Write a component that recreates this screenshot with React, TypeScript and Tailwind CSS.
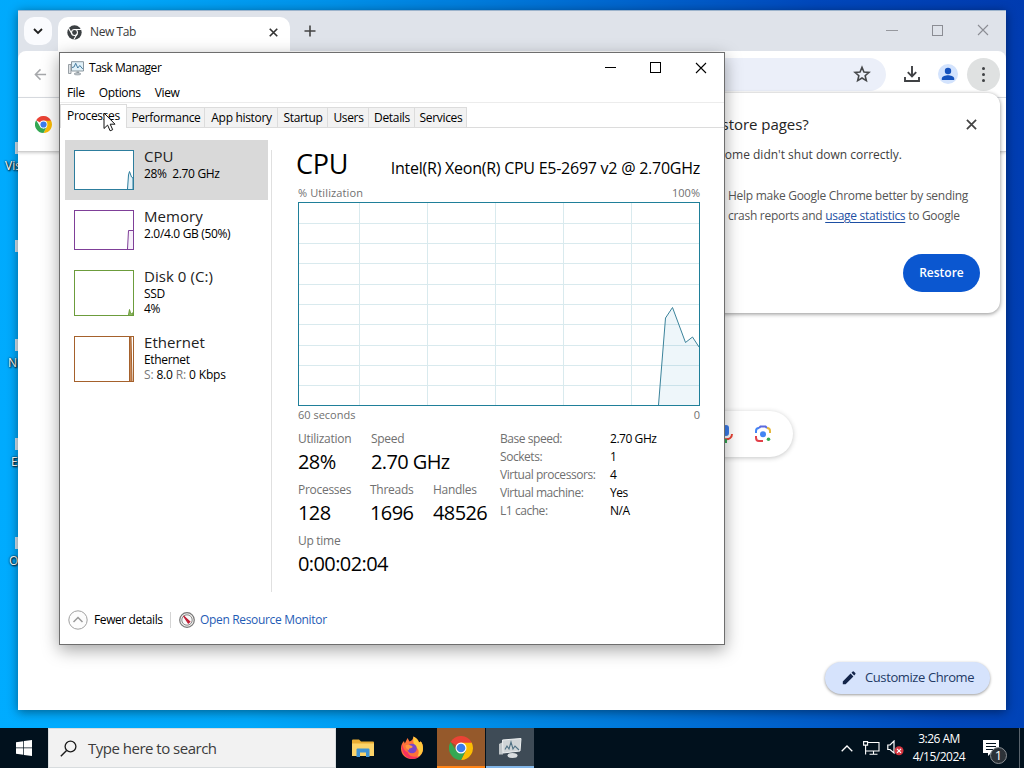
import type { ReactNode } from "react";

type Point = [number, number];

const tabs = [
  { label: "Performance", width: "w-[78px]" },
  { label: "App history", width: "w-[73px]" },
  { label: "Startup", width: "w-[50px]" },
  { label: "Users", width: "w-[41px]" },
  { label: "Details", width: "w-[46px]" },
  { label: "Services", width: "w-[52px]" },
];

const desktopIcons = [
  { label: "Vis", box: "top-[142px]", right: "left-[5px]" },
  { label: "", box: "top-[240px]", right: "left-[5px]" },
  { label: "N", box: "top-[339px]", right: "left-[8px]" },
  { label: "E", box: "top-[438px]", right: "left-[11px]" },
  { label: "O", box: "top-[537px]", right: "left-[9px]" },
];

const specs = [
  ["Base speed:", "2.70 GHz"],
  ["Sockets:", "1"],
  ["Virtual processors:", "4"],
  ["Virtual machine:", "Yes"],
  ["L1 cache:", "N/A"],
];

const cpuPoints: Point[] = [
  [360.5, 203],
  [367.5, 116],
  [374.5, 105.5],
  [387.5, 140.5],
  [394.5, 135],
  [401, 145],
];

function ChromeLogo({ className }: { className?: string }) {
  return (
    <svg viewBox="0 0 48 48" className={className}>
      <path d="M24 24 3.2 12A24 24 0 0 1 44.8 12L44.8 12.5Z" fill="#ea4335" />
      <path d="M24 13H45.3A24 24 0 0 1 24 48L33.5 29.5Z" fill="#fbbc04" />
      <path d="M3.2 12 14.5 29.5 24 35 33 30 24 48A24 24 0 0 1 3.2 12Z" fill="#34a853" />
      <path d="M24 13H45.3L44.8 12 24 10Z" fill="#ea4335" />
      <circle cx="24" cy="24" r="11" fill="#fff" />
      <circle cx="24" cy="24" r="8.7" fill="#3b7ded" />
    </svg>
  );
}

function ChromeMono() {
  return (
    <svg viewBox="0 0 48 48" className="h-[15px] w-[15px]">
      <circle cx="24" cy="24" r="23" fill="#3c4043" />
      <circle cx="24" cy="24" r="9.5" fill="none" stroke="#fff" strokeWidth="3.5" />
      <path d="M24 14.5H46M15.8 28.800 5 10M32.2 28.800 21.5 47" stroke="#fff" strokeWidth="3.5" />
    </svg>
  );
}

function TaskManagerIcon({ className }: { className?: string }) {
  return (
    <svg viewBox="0 0 16 16" className={className}>
      <path d="M.5 4.5h2.500v9H.5z" fill="#dfe3e6" stroke="#838c92" strokeWidth=".8" />
      <path d="M3.500 1.700h12v9.300h-12z" fill="#e2f1f8" stroke="#8b979f" strokeWidth="1" />
      <path d="M4 7.500 6 7l1.700-3.700L9.800 8l2-2.500 3 3.500" fill="none" stroke="#356f96" strokeWidth=".9" />
      <path d="M8.500 11.500h2.500V13H8.500z" fill="#8a949b" />
      <ellipse cx="9.5" cy="13.9" rx="3.4" ry="1.100" fill="#c1c8cc" stroke="#8a949b" strokeWidth=".6" />
    </svg>
  );
}

function CloseIcon({ className, width = 1.1 }: { className?: string; width?: number }) {
  return (
    <svg viewBox="0 0 12 12" className={className}>
      <path d="M1 1l10 10M11 1L1 11" stroke="currentColor" strokeWidth={width} fill="none" />
    </svg>
  );
}

function MiniGraph({
  height,
  color,
  fill,
  points,
}: {
  height: number;
  color: string;
  fill: string;
  points: Point[];
}) {
  return (
    <svg width="60" height={height} className="block shrink-0">
      <rect x=".5" y=".5" width="59" height={height - 1} fill="#fff" />
      <polyline points={points.join(" ")} fill={fill} stroke={color} strokeWidth="1" />
      <rect x=".5" y=".5" width="59" height={height - 1} fill="none" stroke={color} />
    </svg>
  );
}

function Resource({
  title,
  className,
  graph,
  children,
}: {
  title: string;
  className: string;
  graph: ReactNode;
  children: ReactNode;
}) {
  return (
    <div className={`flex gap-[10px] pl-[9px] ${className}`}>
      {graph}
      <div className="-mt-[3px] whitespace-nowrap text-[12px] leading-[15px] tracking-[-0.33px]">
        <div className="text-[15px] leading-[19px] tracking-[0.05px] text-[#222]">{title}</div>
        {children}
      </div>
    </div>
  );
}

function Stat({ label, value, className }: { label: string; value: string; className: string }) {
  return (
    <div className={`shrink-0 ${className}`}>
      <div className="text-[12px] leading-[18px] tracking-[-0.28px] text-[#707070]">{label}</div>
      <div className="text-[20px] leading-[28px] tracking-[-0.6px]">{value}</div>
    </div>
  );
}

function CpuGraph() {
  return (
    <svg width="402" height="204" className="block">
      <rect width="402" height="204" fill="#fff" />
      {[61.5, 129.5, 197.5, 265.5, 333.5].map((x) => (
        <path key={x} d={`M${x} 0v204`} stroke="#d9eaee" />
      ))}
      {[21.5, 41.5, 61.5, 82.5, 102.5, 122.5, 143.5, 163.5, 183.5].map((y) => (
        <path key={y} d={`M0 ${y}h402`} stroke="#d9eaee" />
      ))}
      <polygon points={`${cpuPoints.join(" ")} 401,203 360,203`} fill="#117dbb" fillOpacity=".07" />
      <polyline points={cpuPoints.join(" ")} fill="none" stroke="#3b839b" strokeWidth="1" />
      <rect x=".5" y=".5" width="401" height="203" fill="none" stroke="#1f7f99" />
    </svg>
  );
}

function Browser() {
  return (
    <div className="absolute left-[18px] top-[10px] flex h-[700px] w-[988px] flex-col overflow-hidden border-t border-[#9db4cc] bg-white">
      {/* Tab strip */}
      <div className="flex h-[40px] shrink-0 items-start bg-[#dfe3ea] pl-[6px] pt-[6px]">
        <div className="flex h-7 w-7 items-center justify-center rounded-[10px] bg-[#fafbfe]">
          <svg viewBox="0 0 12 12" className="h-3 w-3">
            <path d="M2 4l4 4 4-4" fill="none" stroke="#1f1f1f" strokeWidth="1.8" />
          </svg>
        </div>
        <div className="ml-[6px] flex h-[34px] w-[232px] items-center rounded-t-[10px] bg-white pb-[4px] pl-[9px]">
          <ChromeMono />
          <span className="ml-2 flex-1 text-[12px] tracking-[-0.4px] text-[#3a3a3a]">New Tab</span>
          <CloseIcon className="mr-[12px] h-[9px] w-[9px] text-[#333]" width={2.2} />
        </div>
        <svg viewBox="0 0 12 12" className="ml-[14px] mt-[8px] h-3 w-3">
          <path d="M6 .5v11M.5 6h11" stroke="#444" strokeWidth="1.6" />
        </svg>
        <div className="ml-auto mr-[17px] mt-[7px] flex items-center gap-[34px] text-[#8b8d94]">
          <span className="h-px w-[12px] bg-[#96989e]" />
          <span className="h-[11px] w-[11px] border border-[#8b8d94]" />
          <CloseIcon className="h-3 w-3" />
        </div>
      </div>

      {/* Toolbar */}
      <div className="flex shrink-0 bg-[#dfe3ea]">
        <div className="flex h-[47px] w-full items-center justify-between rounded-t-lg border-b border-[#dde1e6] bg-white pl-4 pr-[6px]">
          <svg viewBox="0 0 14 14" className="h-[13px] w-[13px]">
            <path d="M13 7H2M7 1.5 1.5 7 7 12.5" fill="none" stroke="#a6a8ab" strokeWidth="1.6" />
          </svg>
          <div className="flex items-center">
            <div className="mr-[18px] flex h-[33px] w-[640px] items-center justify-end rounded-full bg-[#ebeff9] pr-[15px]">
              <svg viewBox="0 0 24 24" className="h-[18px] w-[18px]">
                <path
                  d="M12 3.2l2.6 6.2 6.7.5-5.1 4.4 1.6 6.5L12 17.3l-5.8 3.5 1.6-6.500-5.100-4.400 6.700-.5z"
                  fill="none"
                  stroke="#45474a"
                  strokeWidth="2.1"
                />
              </svg>
            </div>
            <svg viewBox="0 0 16 16" className="h-4 w-4">
              <path d="M8 0v10M3.8 6.2 8 10.400l4.200-4.200M1 11v4h14v-4" fill="none" stroke="#3f4144" strokeWidth="1.9" />
            </svg>
            <svg viewBox="0 0 20 20" className="ml-[18px] h-5 w-5">
              <circle cx="10" cy="10" r="10" fill="#d3e3fd" />
              <circle cx="10" cy="7" r="3.2" fill="#1552bd" />
              <path d="M3.8 16v-1.500c0-2.100 4-3.200 6.200-3.200s6.200 1.100 6.200 3.200V16z" fill="#1552bd" />
            </svg>
            <div className="ml-[9px] flex h-[33px] w-[33px] flex-col items-center justify-center gap-[3px] rounded-full bg-[#dfe1e1]">
              <i className="h-[3px] w-[3px] rounded-full bg-[#3f4144]" />
              <i className="h-[3px] w-[3px] rounded-full bg-[#3f4144]" />
              <i className="h-[3px] w-[3px] rounded-full bg-[#3f4144]" />
            </div>
          </div>
        </div>
      </div>

      {/* Bookmark row */}
      <div className="flex h-[54px] shrink-0 items-center border-b border-[#cfcfcf] pl-[17px] shadow-[0_1px_3px_rgba(0,0,0,0.2)]">
        <ChromeLogo className="h-[17px] w-[17px]" />
      </div>

      {/* Page */}
      <div className="flex flex-1 flex-col items-end">
        <div className="mr-[213px] mt-[259px] flex h-[46px] w-[560px] items-center justify-end rounded-full bg-white pr-[21px] shadow-[0_1px_5px_rgba(32,33,36,0.26)]">
          <svg viewBox="0 0 16 18" className="mr-[20px] h-[18px] w-4">
            <rect x="5" y="0" width="6" height="11" rx="3" fill="#3b7ded" />
            <path d="M2 9c0 7 12 7 12 0" fill="none" stroke="#ea4335" strokeWidth="2" />
            <path d="M8 14v4" stroke="#34a853" strokeWidth="2" />
          </svg>
          <svg viewBox="0 0 18 18" className="h-[18px] w-[18px]">
            <g fill="none" strokeWidth="2">
              <path d="M2 8V6c0-2 1-3 3-3" stroke="#4285f4" />
              <path d="M5 3l1.500-1.500h5L13 3" stroke="#5b6be0" />
              <path d="M13 3c2 0 3 1 3 3v2" stroke="#e5b73b" />
              <path d="M2 11v1.500C2 14.500 3 16 5 16h4" stroke="#e2414a" />
            </g>
            <circle cx="9" cy="9.3" r="3" fill="#4285f4" />
            <circle cx="14.5" cy="14.3" r="1.8" fill="#34a853" />
          </svg>
        </div>
        <div className="mb-[16px] mr-4 mt-auto flex h-8 w-[165px] items-center rounded-full bg-[#d6e3fc] pl-[17px] shadow-[0_1px_3px_rgba(0,0,0,0.4)]">
          <svg viewBox="0 0 14 14" className="mr-[9px] h-[14px] w-[14px]">
            <path d="M.8 13.200V10.400L8.600 2.600l2.800 2.800-7.800 7.800zM9.500 1.700 10.700.6q.7-.5 1.300.1l1.300 1.300q.5.6 0 1.200l-1.100 1.200z" fill="#14254a" />
          </svg>
          <span className="whitespace-nowrap text-[13px] tracking-[-0.4px] text-[#233a66]">Customize Chrome</span>
        </div>
      </div>

      {/* Restore pages bubble */}
      <div className="absolute left-[534px] top-[82px] flex h-[220px] w-[448px] flex-col rounded-xl bg-white pl-[176px] pr-5 pt-[19px] shadow-[0_1px_4px_rgba(0,0,0,0.45)]">
        <div className="flex items-center justify-between pr-[3px]">
          <h2 className="-ml-[24px] whitespace-nowrap text-[15px] font-medium leading-[24px] tracking-[-0.05px] text-[#242424]">
            Restore pages?
          </h2>
          <CloseIcon className="h-[11px] w-[11px] text-[#444]" width={1.9} />
        </div>
        <p className="-ml-[23px] mt-[10px] whitespace-nowrap text-[12px] leading-[18px] text-[#3d3d3d]">
          Chrome didn't shut down correctly.
        </p>
        <p className="mt-[22px] whitespace-nowrap text-[12px] leading-[20px] tracking-[-0.28px] text-[#555]">
          Help make Google Chrome better by sending
          <br />
          crash reports and <span className="text-[#1d4fa3] underline underline-offset-2">usage statistics</span> to Google
        </p>
        <div className="ml-auto mt-[28px] flex h-[38px] w-[77px] items-center justify-center rounded-full bg-[#0b57d0] text-[12px] font-semibold text-white">
          Restore
        </div>
      </div>
    </div>
  );
}

function TaskManager() {
  return (
    <div className="absolute left-[59px] top-[52px] flex h-[593px] w-[666px] flex-col border border-[#6e6e6e] bg-white shadow-[0_5px_16px_rgba(0,0,0,0.36)]">
      {/* Title bar */}
      <div className="flex h-[30px] shrink-0 items-center pl-2 pr-[17px]">
        <TaskManagerIcon className="h-4 w-4" />
        <span className="ml-[5px] flex-1 text-[12px] tracking-[-0.48px]">Task Manager</span>
        <div className="-mt-px flex items-center gap-[34px]">
          <span className="h-px w-[11px] bg-black" />
          <span className="h-[11px] w-[11px] border border-black" />
          <CloseIcon className="h-3 w-3" />
        </div>
      </div>

      {/* Menu */}
      <div className="flex h-[20px] shrink-0 items-center gap-[14px] border-b border-[#ececec] pl-[7px] pt-px text-[12px] leading-[18px] tracking-[-0.33px]">
        <span>File</span>
        <span>Options</span>
        <span>View</span>
      </div>

      {/* Tabs */}
      <div className="flex h-[25px] shrink-0 items-end border-b border-[#dcdcdc] text-[12px] tracking-[-0.33px]">
        <div className="-mb-px flex h-[24px] w-[67px] justify-center border border-b-0 border-[#dcdcdc] bg-white pt-[2px] leading-[18px]">
          Processes
        </div>
        {tabs.map((tab) => (
          <div
            key={tab.label}
            className={`flex h-5 items-center justify-center whitespace-nowrap border-r border-t border-[#dcdcdc] bg-[#f2f2f2] pl-px pt-px leading-[18px] ${tab.width}`}
          >
            {tab.label}
          </div>
        ))}
      </div>

      <div className="flex flex-1">
        {/* Resource list */}
        <div className="mb-[27px] mt-[12px] w-[208px] shrink-0 pl-[5px]">
          <Resource
            title="CPU"
            className="h-[60px] w-[203px] bg-[#d9d9d9] pt-[10px]"
            graph={
              <MiniGraph
                height={40}
                color="#2d7d9d"
                fill="#e4f1f8"
                points={[[53.5, 39], [54.5, 25], [55.5, 21.5], [57.5, 27], [59, 28], [59, 39]]}
              />
            }
          >
            28%&nbsp; 2.70 GHz
          </Resource>
          <Resource
            title="Memory"
            className="h-[60px] pt-[10px]"
            graph={
              <MiniGraph height={40} color="#7f3f98" fill="#f7f0fa" points={[[53.5, 39], [54.5, 20.5], [60, 20.5], [60, 39]]} />
            }
          >
            2.0/4.0 GB (50%)
          </Resource>
          <Resource
            title="Disk 0 (C:)"
            className="h-[66px] pt-[10px]"
            graph={
              <MiniGraph
                height={46}
                color="#6c9c3c"
                fill="#8fb864"
                points={[[54.5, 45], [55.5, 39.5], [56.5, 43], [57.5, 44], [59, 42.5], [59, 45]]}
              />
            }
          >
            SSD
            <br />
            4%
          </Resource>
          <Resource
            title="Ethernet"
            className="h-[66px] pt-[10px]"
            graph={
              <MiniGraph
                height={46}
                color="#a5612c"
                fill="#c98a5b"
                points={[[55.5, 45], [55.5, 1], [57, 1], [58, 45]]}
              />
            }
          >
            Ethernet
            <br />
            <span className="tracking-[-0.15px]">
              <span className="text-[#777]">S:</span> 8.0 <span className="text-[#777]">R:</span> 0 Kbps
            </span>
          </Resource>
        </div>
        <div className="mb-[-1px] mt-[22px] h-[442px] w-[4px] shrink-0 border-r border-[#e0e0e0]" />

        {/* CPU details */}
        <div className="ml-[26px] w-[402px] pt-[18px]">
          <div className="flex h-[38px] items-start justify-between whitespace-nowrap">
            <span className="-ml-[2px] text-[27px] leading-[36px] tracking-[-0.3px]">CPU</span>
            <span className="pt-[9px] text-[16px] leading-[26px] tracking-[-0.25px]">
              Intel(R) Xeon(R) CPU E5-2697 v2 @ 2.70GHz
            </span>
          </div>
          <div className="flex h-[18px] justify-between text-[11px] leading-[18px] text-[#707070]">
            <span className="tracking-[0.12px]">% Utilization</span>
            <span>100%</span>
          </div>
          <CpuGraph />
          <div className="flex h-[24px] justify-between text-[11px] leading-[18px] text-[#707070]">
            <span>60 seconds</span>
            <span>0</span>
          </div>
          <div className="flex whitespace-nowrap">
            <div className="flex w-[202px] shrink-0 flex-col gap-[5px]">
              <div className="flex">
                <Stat label="Utilization" value="28%" className="w-[73px]" />
                <Stat label="Speed" value="2.70 GHz" className="w-[90px]" />
              </div>
              <div className="flex">
                <Stat label="Processes" value="128" className="w-[72px]" />
                <Stat label="Threads" value="1696" className="w-[63px]" />
                <Stat label="Handles" value="48526" className="w-[60px]" />
              </div>
              <Stat label="Up time" value="0:00:02:04" className="w-[100px]" />
            </div>
            <div className="grid h-[90px] grid-cols-[110px_auto] text-[12px] leading-[18px] tracking-[-0.45px]">
              {specs.map(([label, value]) => (
                <div key={label} className="contents">
                  <span className="text-[#707070]">{label}</span>
                  <span>{value}</span>
                </div>
              ))}
            </div>
          </div>
        </div>
      </div>

      {/* Footer */}
      <div className="flex h-[49px] shrink-0 items-center pl-2 text-[12px] tracking-[-0.4px]">
        <svg viewBox="0 0 20 20" className="h-5 w-5">
          <circle cx="10" cy="10" r="9.2" fill="#fcfcfc" stroke="#a0a0a0" strokeWidth="1" />
          <path d="M5.5 12 10 7.500l4.500 4.500" fill="none" stroke="#999" strokeWidth="1.5" />
        </svg>
        <span className="ml-[6px] w-[76px] whitespace-nowrap">Fewer details</span>
        <span className="h-4 w-px bg-[#d4d4d4]" />
        <svg viewBox="0 0 16 16" className="ml-2 h-4 w-4">
          <circle cx="8" cy="8" r="7.3" fill="#f0efed" stroke="#777" strokeWidth="1.2" />
          <circle cx="8" cy="8" r="5.2" fill="#fafafa" stroke="#8a8a8a" strokeWidth="1" />
          <path d="M4.500 4 10.800 9.700 9.300 11z" stroke="#c01e35" strokeWidth="1.2" fill="#c01e35" />
        </svg>
        <span className="ml-[5px] whitespace-nowrap tracking-[-0.33px] text-[#1f5cb5]">Open Resource Monitor</span>
      </div>

      {/* Pointer */}
      <svg viewBox="0 0 13 20" className="absolute left-[43px] top-[59px] h-5 w-[13px]">
        <path d="M1 1v15.500l3.600-3.400 2.500 5.700 2.600-1.100-2.500-5.500H12z" fill="#fff" stroke="#111" strokeWidth="1" />
      </svg>
    </div>
  );
}

function Taskbar() {
  return (
    <div className="absolute bottom-0 left-0 flex h-10 w-full items-stretch bg-[#01111d]">
      <div className="flex w-12 items-center justify-center">
        <svg viewBox="0 0 16 16" className="h-4 w-4" fill="#fff">
          <path d="M0 2.2 7.3 1.200v6.400H0zM8 1.100 16 0v7.600H8zM0 8.300h7.300v6.500L0 13.800zM8 8.300h8V16l-8-1.100z" />
        </svg>
      </div>
      <div className="flex w-[288px] items-center border border-[#d8dcde] bg-[#f2f2f2] pl-[11px]">
        <svg viewBox="0 0 17 17" className="h-[17px] w-[17px]">
          <circle cx="10.5" cy="6.5" r="5.4" fill="none" stroke="#1c1c1c" strokeWidth="1.3" />
          <path d="M6.6 10.400.8 16.200" stroke="#1c1c1c" strokeWidth="1.4" />
        </svg>
        <span className="ml-[11px] text-[15px] tracking-[-0.5px] text-[#3c3c3c]">Type here to search</span>
      </div>
      <div className="ml-[3px] flex w-12 items-center justify-center">
        <svg viewBox="0 0 22 20" className="h-5 w-[22px]">
          <path d="M0 2.500Q0 1.500 1 1.500h6L9 3.500H21q1 0 1 1V18H0z" fill="#e9ad34" />
          <path d="M0 5.500h22V18H0z" fill="#fcd469" />
          <path d="M4.500 11.500q0-1 1-1h11q1 0 1 1V19h-3.500v-4.500H8V19H4.500z" fill="#3f93d4" />
        </svg>
      </div>
      <div className="flex w-[50px] items-center justify-center">
        <svg viewBox="0 0 24 24" className="h-6 w-6">
          <path d="M12 23C5.500 23 1 18.400 1 12.500 1 8.700 2.500 6.500 4 5l.8 2.500L7.500 2l2 3.500C12 5 13 3 13.500.5c3 1.500 4.500 3 5.500 6l1.800-1c1.700 2 2.200 4.500 2.200 7C23 18.500 18.500 23 12 23z" fill="#ff7139" />
          <path d="M13.500.5c3 1.500 4.500 3 5.500 6l1.800-1c1.700 2 2.200 4.500 2.200 7 0 4-2.500 7.500-6 9 2-3 2.500-7 0-9.500-2.500-2-4.500-5-3.500-11.500z" fill="#ffc93c" />
          <path d="M2 8C1 14 4 22.500 12 23c3.500 0 6-1.200 8-3-5 2-11 .5-12.500-4C4 15 3 11 2 8z" fill="#f8315f" />
          <circle cx="12" cy="12.5" r="4.8" fill="#7a45c8" />
          <path d="M5.500 9.500c2-1.500 4-.5 6 .3 2 .7 1 2.200-1 2.400-1.600.3-2 1-1.400 2.300-2.100-.9-3.600-2.500-3.600-5z" fill="#ff9640" />
        </svg>
      </div>
      <div className="flex w-12 items-center justify-center border-b-2 border-[#ff8417] bg-[#95592b]">
        <ChromeLogo className="mt-[2px] h-6 w-6" />
      </div>
      <div className="ml-px flex w-12 items-center justify-center border-b-2 border-[#82b6e8] bg-[#3e4b56]">
        <svg viewBox="0 0 24 22" className="mt-[2px] h-[22px] w-6">
          <path d="M1 7l4-2v12.500H1z" fill="#bfc5c8" />
          <path d="M4.500 3 23 1.500 22 14 5 16z" fill="#cfd4d6" stroke="#edf0f1" />
          <path d="M7 12.500 9 9l2 3 2-7 2 7 2-3 4 4" fill="none" stroke="#4f7184" strokeWidth="1.1" />
          <ellipse cx="14.5" cy="18.5" rx="5" ry="2.5" fill="#d9dddf" />
        </svg>
      </div>

      <div className="ml-auto flex items-center text-white">
        <svg viewBox="0 0 12 7" className="h-[7px] w-3">
          <path d="M.7 6.300 6 1l5.300 5.300" fill="none" stroke="currentColor" strokeWidth="1.3" />
        </svg>
        <svg viewBox="0 0 17 14" className="ml-[10px] h-[14px] w-[17px]">
          <path d="M5 1.500h11v8.500H5M.6.6h4v3.500h-4zM2.600 4v9.500M10.500 10v3M6.500 13.300h8M5 10H2.600" fill="none" stroke="currentColor" strokeWidth="1.1" />
        </svg>
        <svg viewBox="0 0 17 16" className="ml-[7px] h-4 w-[17px]">
          <path d="M.8 5H3l4-4v12L3 9.500H.8z" fill="none" stroke="currentColor" strokeWidth="1.2" />
          <circle cx="12" cy="10.8" r="4.5" fill="#d6353f" />
          <path d="M10 8.800l4 4M14 8.800l-4 4" stroke="#fff" strokeWidth="1.2" />
        </svg>
        <div className="ml-[6px] flex w-[58px] flex-col items-center whitespace-nowrap text-[12px] leading-[18px] tracking-[-0.5px]">
          <span>3:26 AM</span>
          <span>4/15/2024</span>
        </div>
        <div className="relative ml-[15px] h-6 w-[26px]">
          <svg viewBox="0 0 16 16" className="mt-1 h-4 w-4">
            <path d="M0 0h16v13H8l-3 3v-3H0z" fill="#fff" />
            <path d="M3 3.500h10M3 6.500h10M3 9.500h7" stroke="#01111d" strokeWidth="1.2" />
          </svg>
          <span className="absolute left-[7px] top-[11px] flex h-[17px] w-[17px] items-center justify-center rounded-full border border-[#8a8f94] bg-[#2c3238] text-[13px] leading-none">
            1
          </span>
        </div>
        <div className="ml-[10px] h-10 w-[5px] border-l border-[#59636c]" />
      </div>
    </div>
  );
}

export default function App() {
  return (
    <div className="relative h-[768px] w-[1024px] cursor-default overflow-hidden bg-[linear-gradient(80deg,#00acff_0%,#00a8fa_22%,#0092ea_40%,#0068d0_64%,#0048bc_82%,#003bb0_100%)] font-['Open_Sans','Noto_Sans',sans-serif] text-black">
      {desktopIcons.map((icon) => (
        <div key={icon.box} className={`absolute left-0 h-8 w-[18px] ${icon.box}`}>
          <span className="absolute left-[15px] top-0 h-3 w-[3px] bg-[#d5e6f2]" />
          <span
            className={`absolute top-[16px] text-[12px] leading-[16px] text-white [text-shadow:1px_1px_2px_#000,0_0_2px_#000] ${icon.right}`}
          >
            {icon.label}
          </span>
        </div>
      ))}
      <div className="absolute left-[18px] top-[10px] h-[700px] w-[988px] shadow-[0_2px_10px_rgba(0,0,0,0.45)]" />
      <Browser />
      <TaskManager />
      <Taskbar />
    </div>
  );
}
